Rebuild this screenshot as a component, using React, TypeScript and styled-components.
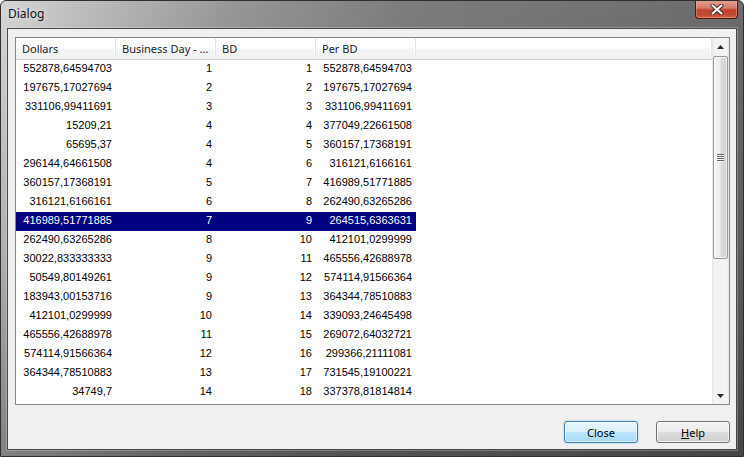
import React from "react";
import styled, { createGlobalStyle } from "styled-components";

const Global = createGlobalStyle`
  html, body { margin: 0; padding: 0; background: #ffffff; }
  body { width: 744px; height: 457px; overflow: hidden; }
  * { box-sizing: border-box; }
`;

const Window = styled.div`
  width: 744px;
  height: 457px;
  border: 1px solid #2f2f2f;
  border-radius: 6px 6px 0 0;
  display: flex;
  flex-direction: column;
  background:
    linear-gradient(to bottom, rgba(0, 0, 0, 0) 0%, rgba(0, 0, 0, 0.12) 55%, rgba(0, 0, 0, 0.32) 100%),
    linear-gradient(100deg, #d6d6d6 0%, #c2c2c2 8%, #979797 28%, #7c7c7c 50%, #727272 75%, #666666 100%);
  overflow: hidden;
`;

const TitleBar = styled.div`
  height: 27px;
  flex: none;
  display: flex;
  align-items: flex-start;
  padding: 0 5px 0 7px;
`;

const TitleText = styled.span`
  font-family: "Noto Sans", "Open Sans", sans-serif;
  font-size: 12px;
  line-height: 26px;
  color: #111;
  text-shadow: 0 0 6px rgba(255, 255, 255, 0.8);
`;

const CaptionClose = styled.div`
  margin-left: auto;
  margin-top: -1px;
  width: 43px;
  height: 19px;
  border: 1px solid #4b1810;
  border-top: none;
  border-radius: 0 0 4px 4px;
  display: flex;
  align-items: center;
  justify-content: center;
  background: linear-gradient(to bottom, #e3a293 0%, #d57a68 45%, #c0422c 55%, #c54a30 85%, #d66a4a 100%);
  box-shadow: inset 0 0 0 1px rgba(255, 200, 180, 0.35);
`;

const Client = styled.div`
  flex: 1;
  margin: 0 6px 6px 6px;
  border: 1px solid #474747;
  box-shadow: 0 0 0 1px rgba(255, 255, 255, 0.25);
  background: #f0f0f0;
  padding: 8px 6px 6px 7px;
  display: flex;
  flex-direction: column;
`;

const ListView = styled.div`
  height: 368px;
  flex: none;
  border: 1px solid #828790;
  background: #ffffff;
  display: flex;
`;

const TableArea = styled.div`
  flex: 1;
  overflow: hidden;
  display: flex;
  flex-direction: column;
`;

const COLS = "100px 100px 100px 100px 1fr";

const HeaderRow = styled.div`
  display: grid;
  grid-template-columns: ${COLS};
  height: 22px;
  border-bottom: 1px solid #d5d5d5;
  background: linear-gradient(to bottom, #ffffff 0%, #ffffff 45%, #f3f4f6 55%, #f1f2f4 100%);
`;

const HeaderCell = styled.div`
  border-right: 1px solid #e5e5e5;
  box-shadow: inset -1px 0 0 #ffffff;
  padding-left: 6px;
  font-family: "Noto Sans", "Open Sans", sans-serif;
  font-size: 11px;
  line-height: 21px;
  color: #1e1e1e;
  white-space: nowrap;
  overflow: hidden;
`;

const Row = styled.div`
  display: grid;
  grid-template-columns: ${COLS};
  height: 19px;
  flex: none;
`;

const Cell = styled.div<{ $selected?: boolean }>`
  text-align: right;
  padding-right: 4px;
  font-family: "Liberation Sans", Arial, sans-serif;
  font-size: 11px;
  line-height: 16px;
  white-space: nowrap;
  color: ${(p) => (p.$selected ? "#ffffff" : "#000000")};
  background: ${(p) => (p.$selected ? "#000080" : "transparent")};
`;

const ScrollBar = styled.div`
  width: 17px;
  flex: none;
  display: flex;
  flex-direction: column;
  background: linear-gradient(to right, #e6e6e6 0%, #f2f2f2 15%, #f4f4f4 85%, #e9e9e9 100%);
`;

const ScrollButton = styled.div`
  height: 17px;
  flex: none;
  display: flex;
  align-items: center;
  justify-content: center;
`;

const Thumb = styled.div`
  height: 203px;
  flex: none;
  margin: 1px 1px 0 1px;
  border: 1px solid #979797;
  border-radius: 2px;
  background: linear-gradient(to right, #f5f5f5 0%, #ececec 45%, #dcdcdc 55%, #d0d0d0 100%);
  box-shadow: inset 0 0 0 1px rgba(255, 255, 255, 0.7);
  display: flex;
  align-items: center;
  justify-content: center;
`;

const Grip = styled.div`
  width: 7px;
  height: 8px;
  background: repeating-linear-gradient(to bottom, #5f5f5f 0px, #5f5f5f 1px, #f8f8f8 1px, #f8f8f8 2px);
`;

const Track = styled.div`
  flex: 1;
`;

const ButtonRow = styled.div`
  margin-top: 16px;
  display: flex;
  justify-content: flex-end;
  gap: 18px;
`;

const DlgButton = styled.button<{ $default?: boolean }>`
  width: 74px;
  height: 22px;
  padding: 0;
  border-radius: 3px;
  font-family: "Noto Sans", "Open Sans", sans-serif;
  font-size: 11px;
  color: #000;
  cursor: default;
  border: 1px solid ${(p) => (p.$default ? "#3c7fb1" : "#707070")};
  background: ${(p) =>
    p.$default
      ? "linear-gradient(to bottom, #eaf6fd 0%, #d9f0fc 50%, #bee6fd 50%, #a7d9f5 100%)"
      : "linear-gradient(to bottom, #f2f2f2 0%, #ebebeb 50%, #dddddd 50%, #cfcfcf 100%)"};
  box-shadow: ${(p) =>
    p.$default
      ? "inset 0 0 0 1px rgba(255,255,255,0.6), 0 0 2px rgba(80,170,230,0.6)"
      : "inset 0 0 0 1px rgba(255,255,255,0.7)"};
`;

const Mnemonic = styled.span`
  text-decoration: underline;
`;

const rows: [string, string, string, string][] = [
  ["552878,64594703", "1", "1", "552878,64594703"],
  ["197675,17027694", "2", "2", "197675,17027694"],
  ["331106,99411691", "3", "3", "331106,99411691"],
  ["15209,21", "4", "4", "377049,22661508"],
  ["65695,37", "4", "5", "360157,17368191"],
  ["296144,64661508", "4", "6", "316121,6166161"],
  ["360157,17368191", "5", "7", "416989,51771885"],
  ["316121,6166161", "6", "8", "262490,63265286"],
  ["416989,51771885", "7", "9", "264515,6363631"],
  ["262490,63265286", "8", "10", "412101,0299999"],
  ["30022,833333333", "9", "11", "465556,42688978"],
  ["50549,80149261", "9", "12", "574114,91566364"],
  ["183943,00153716", "9", "13", "364344,78510883"],
  ["412101,0299999", "10", "14", "339093,24645498"],
  ["465556,42688978", "11", "15", "269072,64032721"],
  ["574114,91566364", "12", "16", "299366,21111081"],
  ["364344,78510883", "13", "17", "731545,19100221"],
  ["34749,7", "14", "18", "337378,81814814"],
];

const SELECTED = 8;

const Arrow = ({ down }: { down?: boolean }) => (
  <svg width="7" height="4" viewBox="0 0 7 4">
    <polygon points={down ? "0,0 7,0 3.5,4" : "3.5,0 7,4 0,4"} fill="#2a2a2a" />
  </svg>
);

export default function App() {
  return (
    <>
      <Global />
      <Window>
        <TitleBar>
          <TitleText>Dialog</TitleText>
          <CaptionClose>
            <svg width="14" height="11" viewBox="0 0 14 11">
              <path d="M2.5 1.5 L11.5 9.5 M11.5 1.5 L2.5 9.5" stroke="#3a2a28" strokeWidth="4" strokeLinecap="round" />
              <path d="M2.5 1.5 L11.5 9.5 M11.5 1.5 L2.5 9.5" stroke="#ffffff" strokeWidth="2.2" strokeLinecap="round" />
            </svg>
          </CaptionClose>
        </TitleBar>
        <Client>
          <ListView>
            <TableArea>
              <HeaderRow>
                <HeaderCell>Dollars</HeaderCell>
                <HeaderCell>Business Day - ...</HeaderCell>
                <HeaderCell>BD</HeaderCell>
                <HeaderCell>Per BD</HeaderCell>
                <HeaderCell />
              </HeaderRow>
              {rows.map((r, i) => (
                <Row key={i}>
                  {r.map((v, j) => (
                    <Cell key={j} $selected={i === SELECTED}>
                      {v}
                    </Cell>
                  ))}
                  <Cell />
                </Row>
              ))}
            </TableArea>
            <ScrollBar>
              <ScrollButton>
                <Arrow />
              </ScrollButton>
              <Thumb>
                <Grip />
              </Thumb>
              <Track />
              <ScrollButton>
                <Arrow down />
              </ScrollButton>
            </ScrollBar>
          </ListView>
          <ButtonRow>
            <DlgButton $default>Close</DlgButton>
            <DlgButton>
              <Mnemonic>H</Mnemonic>elp
            </DlgButton>
          </ButtonRow>
        </Client>
      </Window>
    </>
  );
}
